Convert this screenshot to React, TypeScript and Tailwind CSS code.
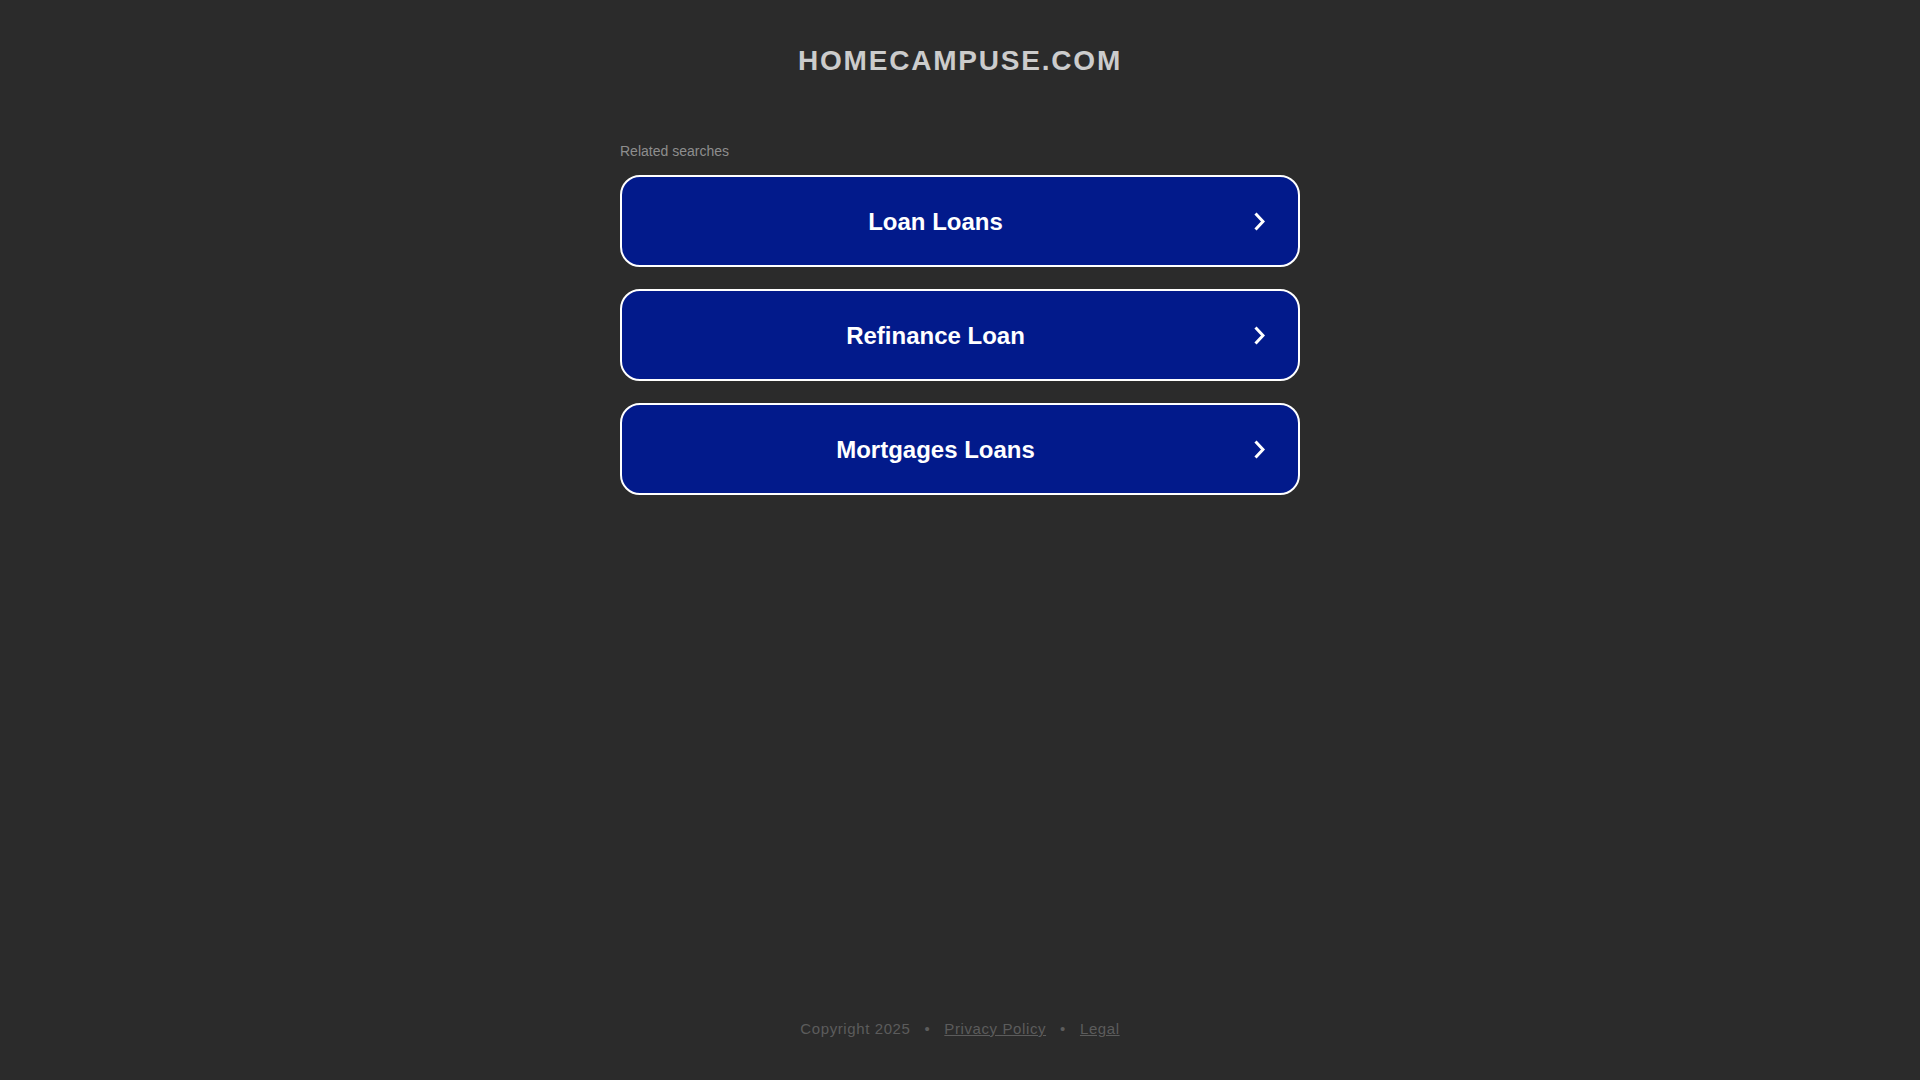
const searches = ["Loan Loans", "Refinance Loan", "Mortgages Loans"];

function Chevron() {
  return (
    <svg width="11" height="19" viewBox="0 0 11 19" className="ml-[5px] mr-[33px] shrink-0">
      <polyline
        points="1.5,1.5 9,9.5 1.5,17.5"
        fill="none"
        stroke="#ffffff"
        strokeWidth="3"
        strokeLinejoin="miter"
      />
    </svg>
  );
}

export default function App() {
  return (
    <div className="h-screen flex flex-col bg-[#2b2b2b] font-['Liberation_Sans',Arial,sans-serif]">
      <h1 className="mt-[47px] text-center text-[28px] leading-[28px] font-bold tracking-[1.8px] text-[#cccccc]">
        HOMECAMPUSE.COM
      </h1>

      <div className="mx-auto w-[680px] mt-[69px]">
        <p className="text-[14px] leading-[14px] text-[#8e8e8e]">Related searches</p>
        <div className="mt-[17px] flex flex-col gap-[22px]">
          {searches.map((s) => (
            <a
              key={s}
              href="#"
              className="h-[92px] flex items-center rounded-[20px] border-2 border-white bg-[#021a8b] text-white"
            >
              <span className="flex-1 text-center text-[24px] leading-[28px] font-bold pt-[2px]">{s}</span>
              <Chevron />
            </a>
          ))}
        </div>
      </div>

      <footer className="mt-auto mb-[44px] flex justify-center items-center gap-[14px] text-[15px] leading-[15px] tracking-[0.6px] text-[#5c5c5c]">
        <span>Copyright 2025</span>
        <span>•</span>
        <a href="#" className="underline">Privacy Policy</a>
        <span>•</span>
        <a href="#" className="underline">Legal</a>
      </footer>
    </div>
  );
}
